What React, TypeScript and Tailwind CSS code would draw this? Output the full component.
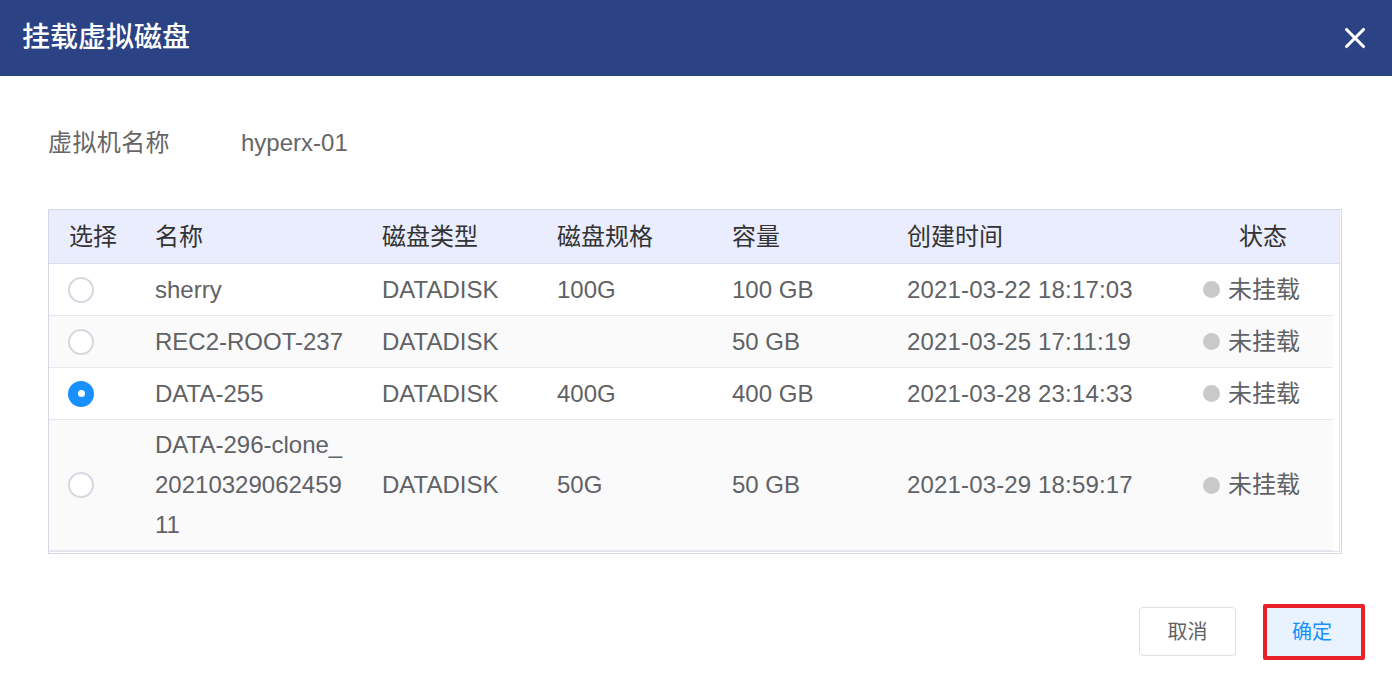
import { X } from 'lucide-react'

interface Disk {
  name: string[]
  type: string
  spec: string
  size: string
  created: string
  checked?: boolean
}

const disks: Disk[] = [
  { name: ['sherry'], type: 'DATADISK', spec: '100G', size: '100 GB', created: '2021-03-22 18:17:03' },
  { name: ['REC2-ROOT-237'], type: 'DATADISK', spec: '', size: '50 GB', created: '2021-03-25 17:11:19' },
  { name: ['DATA-255'], type: 'DATADISK', spec: '400G', size: '400 GB', created: '2021-03-28 23:14:33', checked: true },
  {
    name: ['DATA-296-clone_', '20210329062459', '11'],
    type: 'DATADISK',
    spec: '50G',
    size: '50 GB',
    created: '2021-03-29 18:59:17',
  },
]

const font = { fontFamily: '"Liberation Sans", "Noto Sans CJK SC", sans-serif' }

function Radio({ checked }: { checked?: boolean }) {
  if (checked) {
    return (
      <span className="flex h-[26px] w-[26px] items-center justify-center rounded-full bg-[#1890ff]">
        <span className="h-[7px] w-[7px] rounded-full bg-white" />
      </span>
    )
  }
  return <span className="block h-[26px] w-[26px] rounded-full border-2 border-[#d5d8e0] bg-white" />
}

export default function App() {
  return (
    <div className="h-[688px] w-[1392px] bg-white" style={font}>
      <div className="flex h-[76px] items-center justify-between bg-[#2b4384] pl-[22px] pr-[20px]">
        <h1 className="text-[28px] font-medium text-white">挂载虚拟磁盘</h1>
        <X className="h-[34px] w-[34px] text-white" strokeWidth={2.2} />
      </div>

      <div className="pl-[48px] pr-[50px]">
        <div className="flex h-[133px] items-center text-[24px] text-[#666]">
          <span className="w-[193px] tracking-[0.4px]">虚拟机名称</span>
          <span>hyperx-01</span>
        </div>

        <div className="border border-[#d6d9e3]">
          <div className="mb-px mr-px border-b border-r border-[#e1e4ec]">
            <div className="flex h-[54px] items-center border-b border-[#dcdfe8] bg-[#e9edfd] text-[24px] text-[#333]">
              <div className="w-[86px] pl-[20px]">选择</div>
              <div className="w-[227px] pl-[20px]">名称</div>
              <div className="w-[175px] pl-[20px]">磁盘类型</div>
              <div className="w-[175px] pl-[20px]">磁盘规格</div>
              <div className="w-[175px] pl-[20px]">容量</div>
              <div className="w-[296px] pl-[20px]">创建时间</div>
              <div className="flex-1 pl-[4px] text-center">状态</div>
            </div>
            <div className="mr-[6px]">
              {disks.map((d, i) => (
                <div
                  key={i}
                  className={`flex items-center border-b border-[#e6e8ee] text-[24px] text-[#606266] ${
                    i % 2 === 1 ? 'bg-[#fafafa]' : 'bg-white'
                  } ${d.name.length > 1 ? 'py-[5px]' : 'h-[52px]'}`}
                >
                  <div className="w-[86px] pl-[19px]">
                    <Radio checked={d.checked} />
                  </div>
                  <div className="w-[227px] pl-[20px] leading-[40px]">
                    {d.name.map((line) => (
                      <span key={line} className="block">
                        {line}
                      </span>
                    ))}
                  </div>
                  <div className="w-[175px] pl-[20px]">{d.type}</div>
                  <div className="w-[175px] pl-[20px]">{d.spec}</div>
                  <div className="w-[175px] pl-[20px]">{d.size}</div>
                  <div className="w-[296px] pl-[20px] tracking-[0.15px]">{d.created}</div>
                  <div className="flex flex-1 items-center gap-[8px] pl-[20px]">
                    <span className="h-[17px] w-[17px] rounded-full bg-[#c9c9c9]" />
                    <span>未挂载</span>
                  </div>
                </div>
              ))}
            </div>
          </div>
        </div>

        <div className="-mr-[23px] mt-[50px] flex justify-end gap-[27px]">
          <button className="mt-[3px] h-[49px] w-[97px] rounded-[4px] border border-[#dcdfe6] bg-white text-[20px] text-[#606266]">
            取消
          </button>
          <button className="h-[56px] w-[102px] rounded-[2px] border-[4px] border-[#e8202a] bg-[#e8f3ff] pr-[4px] text-[20px] text-[#1890ff]">
            确定
          </button>
        </div>
      </div>
    </div>
  )
}
